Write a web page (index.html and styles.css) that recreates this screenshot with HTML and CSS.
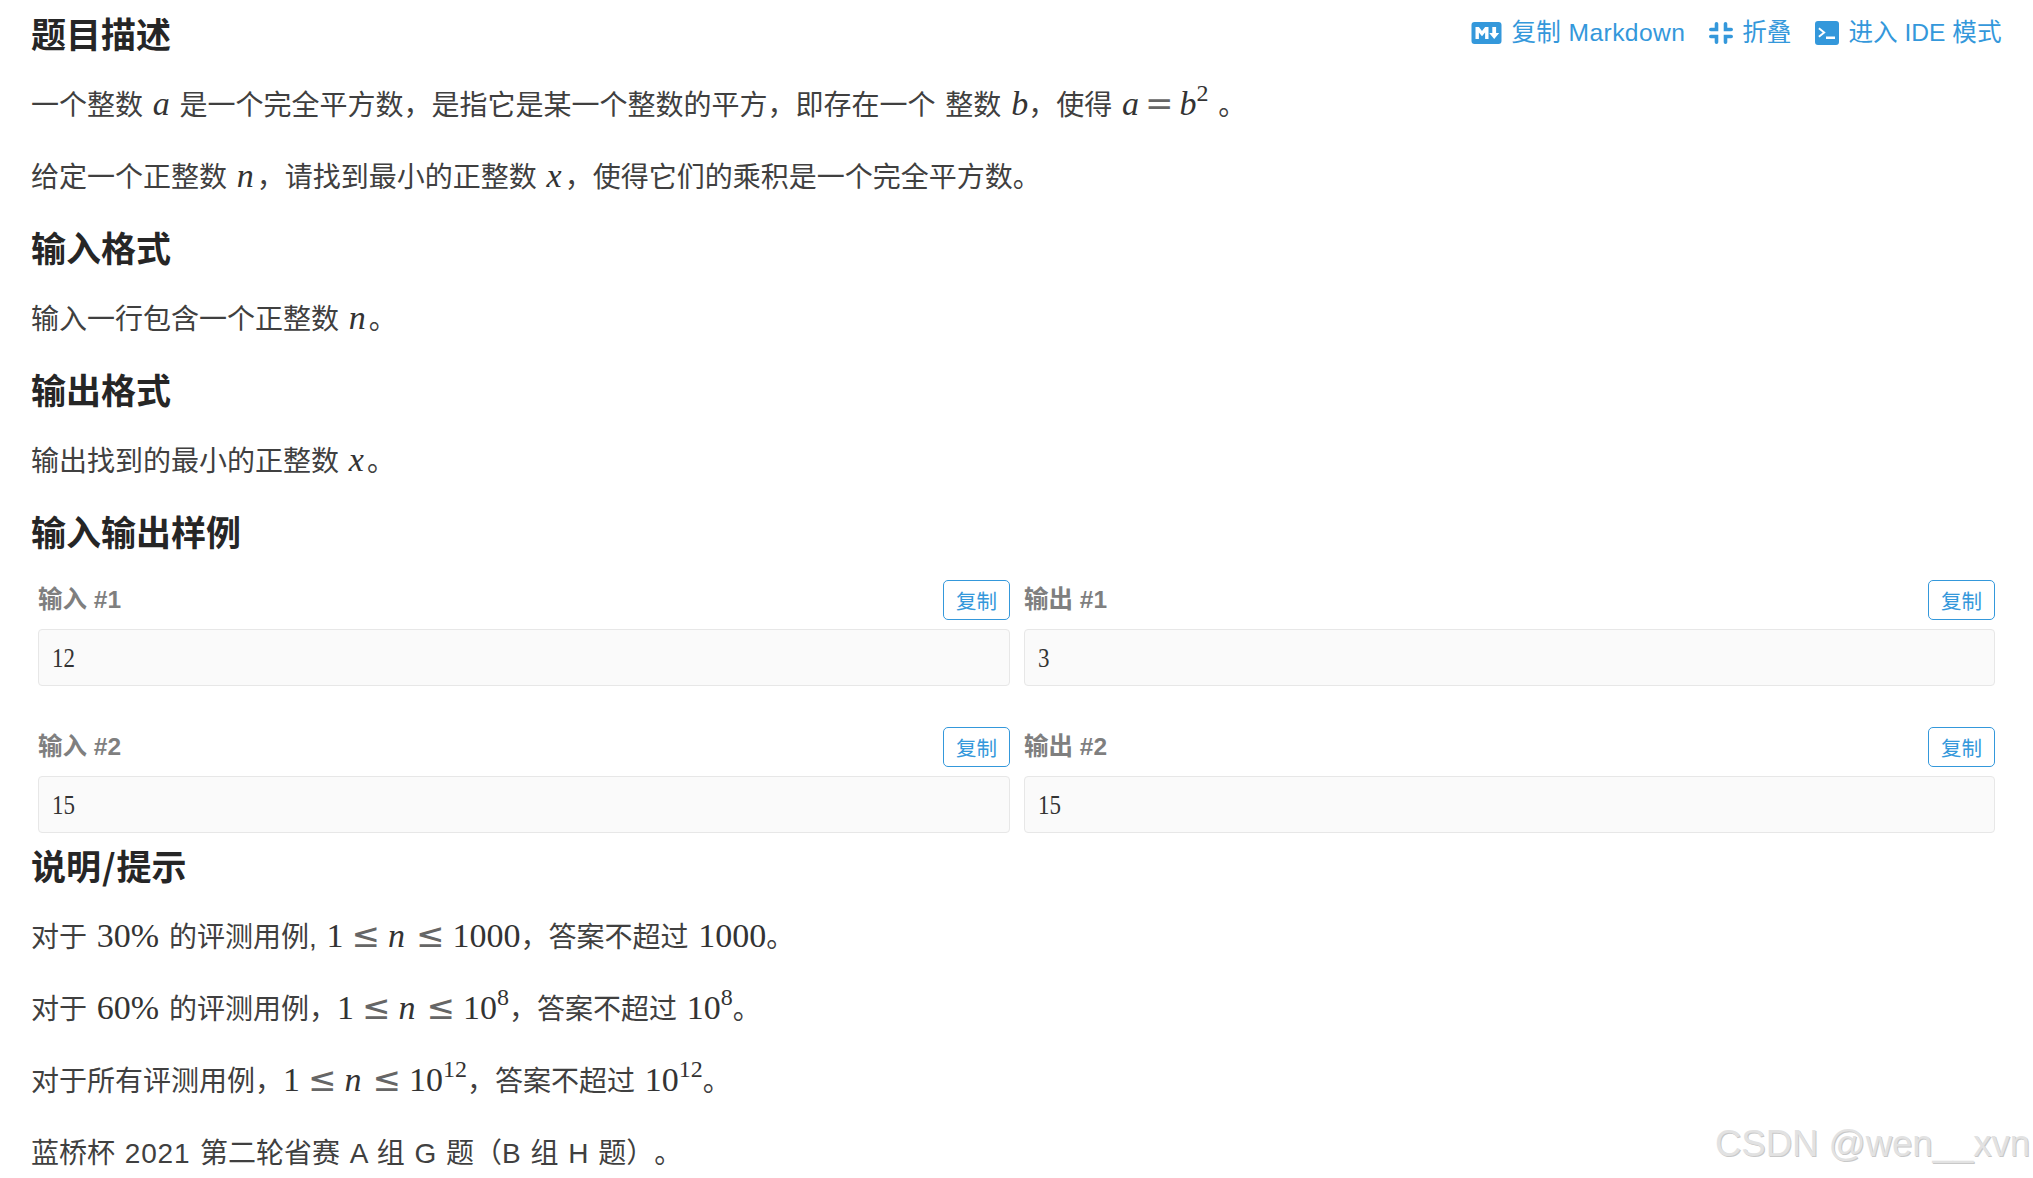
FILE: index.html
```html
<!DOCTYPE html>
<html lang="zh-CN">
<head>
<meta charset="utf-8">
<title>题目描述</title>
<link rel="stylesheet" href="styles.css">
</head>
<body>
<main class="page">
  <div class="title-row">
    <h2 class="head">题目描述</h2>
    <nav class="tools">
      <a class="tool">
        <svg class="ico-md" viewBox="0 0 30 22"><path fill-rule="evenodd" d="M3 0h24a3 3 0 0 1 3 3v16a3 3 0 0 1-3 3H3a3 3 0 0 1-3-3V3a3 3 0 0 1 3-3zM4 5v12h3.400v-6.600l3.100 3.900 3.100-3.900V17H17V5h-3.400l-3.100 4-3.100-4zM20.800 5v6h-3.100l5 6 5-6h-3.100V5z"/></svg>
        <span class="tool-md">复制 Markdown</span>
      </a>
      <a class="tool">
        <svg class="ico-fold" viewBox="0 0 24 22"><path d="M1.800 7.500H7.500V1.800M22.200 7.500H16.500V1.800M1.800 14.500H7.500V20.200M22.200 14.500H16.500V20.200"/></svg>
        <span>折叠</span>
      </a>
      <a class="tool">
        <svg class="ico-sq" viewBox="0 0 24 24"><path fill-rule="evenodd" d="M3 0h18a3 3 0 0 1 3 3v18a3 3 0 0 1-3 3H3a3 3 0 0 1-3-3V3a3 3 0 0 1 3-3zM4.500 6.500 3.300 8l4.400 3.500-4.400 3.500 1.200 1.500 6.200-5zM11 15.500V18h9v-2.500z"/></svg>
        <span>进入 IDE 模式</span>
      </a>
    </nav>
  </div>
  <p>一个整数 <i class="m tight">a</i> 是一个完全平方数，是指它是某一个整数的平方，即存在一个 整数 <i class="m tight">b</i>，使得 <i class="m tight">a</i><span class="rel eq">=</span><i class="m tight">b</i><sup class="m">2</sup> 。</p>
  <p>给定一个正整数 <i class="m">n</i>，请找到最小的正整数 <i class="m">x</i>，使得它们的乘积是一个完全平方数。</p>
  <h2 class="head">输入格式</h2>
  <p>输入一行包含一个正整数 <i class="m">n</i>。</p>
  <h2 class="head">输出格式</h2>
  <p>输出找到的最小的正整数 <i class="m">x</i>。</p>
  <h2 class="head">输入输出样例</h2>
  <div class="samples">
    <section class="sample">
      <div class="io">
        <div class="io-head"><span class="io-label">输入 #1</span><button class="copy">复制</button></div>
        <pre class="code"><span class="digits">12</span></pre>
      </div>
      <div class="io">
        <div class="io-head"><span class="io-label">输出 #1</span><button class="copy">复制</button></div>
        <pre class="code"><span class="digits">3</span></pre>
      </div>
    </section>
    <section class="sample">
      <div class="io">
        <div class="io-head"><span class="io-label">输入 #2</span><button class="copy">复制</button></div>
        <pre class="code"><span class="digits">15</span></pre>
      </div>
      <div class="io">
        <div class="io-head"><span class="io-label">输出 #2</span><button class="copy">复制</button></div>
        <pre class="code"><span class="digits">15</span></pre>
      </div>
    </section>
  </div>
  <h2 class="head">说明<span class="slash">/</span>提示</h2>
  <p>对于 <span class="m">30%</span> 的评测用例, <span class="m">1</span><span class="rel">≤</span><i class="m">n</i><span class="rel">≤</span><span class="m">1000</span>，答案不超过 <span class="m">1000</span>。</p>
  <p>对于 <span class="m">60%</span> 的评测用例，<span class="m">1</span><span class="rel">≤</span><i class="m">n</i><span class="rel">≤</span><span class="m">10</span><sup class="m">8</sup>，答案不超过 <span class="m">10</span><sup class="m">8</sup>。</p>
  <p>对于所有评测用例，<span class="m">1</span><span class="rel">≤</span><i class="m">n</i><span class="rel">≤</span><span class="m">10</span><sup class="m">12</sup>，答案不超过 <span class="m">10</span><sup class="m">12</sup>。</p>
  <p>蓝桥杯 <span class="num">2021</span> 第二轮省赛 A 组 G 题（B 组 H 题）。</p>
</main>
<div class="watermark">CSDN @wen__xvn</div>
</body>
</html>
```
FILE: styles.css
```css
html, body {
  margin: 0;
  padding: 0;
  background: #fff;
}
body {
  height: 1178px;
  overflow: hidden;
  position: relative;
  font-family: "Liberation Sans", "Noto Sans CJK SC", sans-serif;
  font-size: 28px;
  line-height: 42px;
  color: #404040;
}
.page {
  padding: 15px 38px 0 31px;
}
.title-row {
  display: flex;
  justify-content: space-between;
  align-items: flex-start;
}
.head {
  margin: -3px 0 31px;
  font-family: "Noto Sans CJK SC", sans-serif;
  font-size: 35px;
  line-height: 42px;
  font-weight: 700;
  color: #262626;
}
.slash {
  padding: 0 1px;
}
p {
  margin: 0 0 30px;
  word-spacing: 2px;
  text-spacing-trim: space-all;
}
.num {
  letter-spacing: .8px;
}
.tools {
  display: flex;
  gap: 24px;
  margin: -3px -6.500px 0 0;
  color: #3498db;
  font-size: 24.600px;
}
.tool {
  display: flex;
  align-items: center;
  gap: 9px;
}
.tool svg {
  fill: #3498db;
}
.tool .ico-fold {
  fill: none;
  stroke: #3498db;
  stroke-width: 3.600;
  stroke-linecap: round;
}
.tool-md {
  letter-spacing: .4px;
}
.ico-md {
  width: 31px;
  height: 22px;
}
.ico-sq {
  width: 24px;
  height: 24px;
}
.ico-fold {
  width: 24px;
  height: 22px;
}
.m {
  font-family: "Liberation Serif", serif;
  font-size: 34px;
  line-height: 0;
  color: #333;
}
i.m {
  font-style: italic;
  letter-spacing: 3px;
}
i.tight {
  letter-spacing: 0;
}
.rel {
  padding: 0 8px;
  font-family: "DejaVu Sans", sans-serif;
  font-size: 34px;
  line-height: 0;
  color: #666;
}
.eq {
  padding: 0 6px;
}
sup.m {
  font-size: 24px;
  vertical-align: 14px;
}
.samples {
  margin: -3px 0 0 7px;
}
.sample {
  display: grid;
  grid-template-columns: 972px 971px;
  gap: 14px;
  margin-bottom: 41px;
}
.sample:last-child {
  margin-bottom: 0;
}
.io-head {
  display: flex;
  justify-content: space-between;
  align-items: center;
  height: 40px;
  margin-bottom: 9px;
}
.io-label {
  font-size: 24.500px;
  font-weight: 700;
  color: #7f7f7f;
}
.copy {
  width: 67px;
  height: 40px;
  padding: 0;
  background: #fff;
  border: 1.300px solid #3498db;
  border-radius: 5px;
  color: #3498db;
  font-family: inherit;
  font-size: 20.500px;
}
.code {
  margin: 0;
  height: 57px;
  box-sizing: border-box;
  padding: 0 13px;
  background: #fafafa;
  border: 1.300px solid #e7e7e7;
  border-radius: 4px;
  font-family: "Liberation Serif", serif;
  font-size: 28px;
  line-height: 55px;
  color: #333;
}
.digits {
  display: inline-block;
  transform: scaleX(.82);
  transform-origin: left center;
}
.samples + .head {
  margin-top: 11.400px;
}
.watermark {
  position: absolute;
  right: 3px;
  bottom: 11px;
  font-size: 36.500px;
  line-height: 46px;
  color: #e2e2e2;
  text-shadow: 1px 1px 0 #c8c8c8;
}
```
